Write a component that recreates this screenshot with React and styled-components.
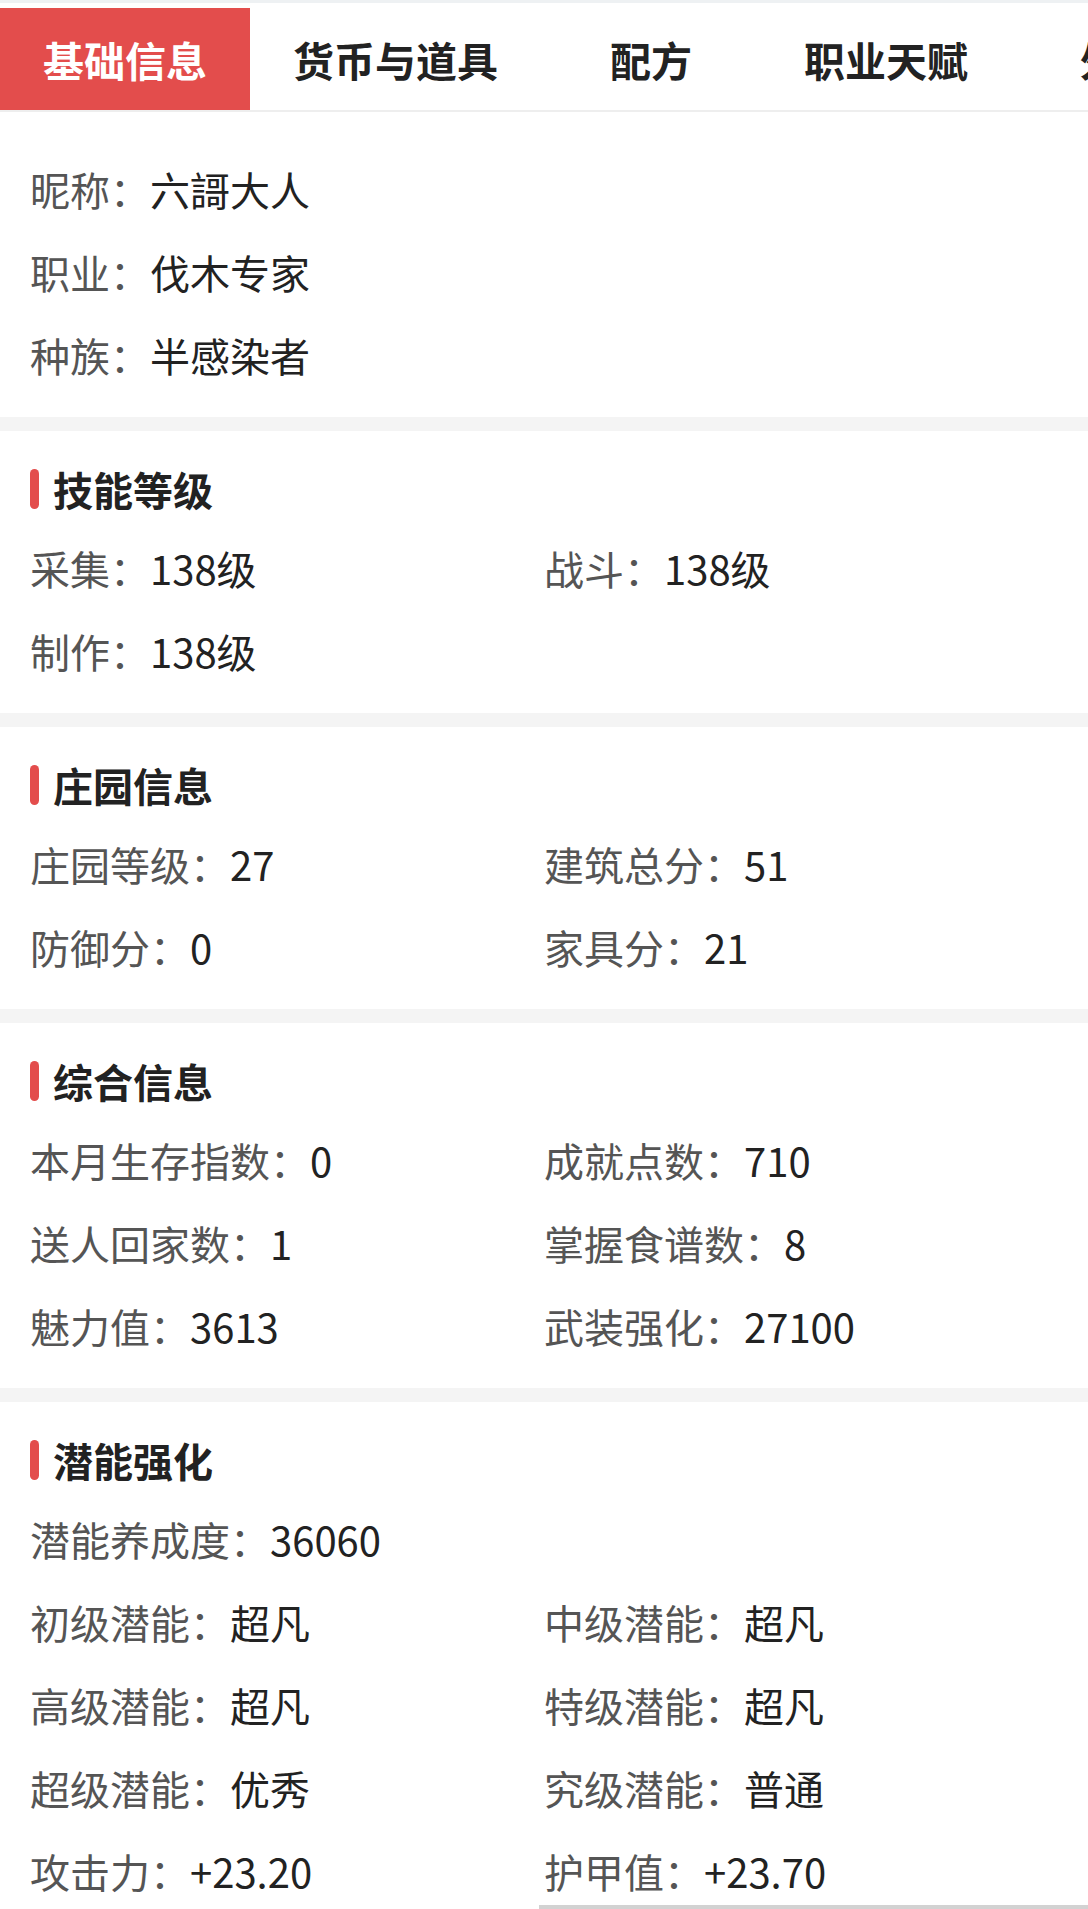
import React from 'react';
import styled, { createGlobalStyle } from 'styled-components';

const GlobalStyle = createGlobalStyle`
  html, body {
    margin: 0;
    padding: 0;
    background: #f4f4f4;
    font-family: "Noto Sans CJK SC", "Noto Sans", sans-serif;
  }
`;

const Page = styled.div`
  width: 1088px;
  overflow: hidden;
`;

const Header = styled.div`
  background: #fff;
  padding-top: 5px;
  border-top: 3px solid #eef1f3;
`;

const TabBar = styled.div`
  display: flex;
  height: 102px;
  border-bottom: 2px solid #eeeeee;
  white-space: nowrap;
  overflow: hidden;
`;

const Tab = styled.div`
  flex: none;
  display: flex;
  align-items: center;
  padding: 0 43px;
  font-size: 41px;
  font-weight: 700;
  color: ${p => (p.$active ? '#fff' : '#222')};
  background: ${p => (p.$active ? '#e34d4c' : 'transparent')};

  & + & + & {
    margin-left: 26px;
  }
`;

const Section = styled.section`
  background: #fff;
  padding: 35px 30px 21px;
  margin-bottom: 14px;
`;

const Title = styled.h2`
  display: flex;
  align-items: center;
  gap: 14px;
  height: 46px;
  margin: 0 0 14px;
  font-size: 40px;
  font-weight: 700;
  color: #222;

  &::before {
    content: '';
    width: 9px;
    height: 40px;
    border-radius: 5px;
    background: #e34d4c;
  }
`;

const Grid = styled.div`
  display: grid;
  grid-template-columns: ${p => (p.$cols === 1 ? '1fr' : '1fr 1fr')};
`;

const Item = styled.div`
  display: flex;
  align-items: center;
  height: 83px;
  font-size: 40px;
  white-space: nowrap;
  grid-column: ${p => (p.$wide ? '1 / -1' : 'auto')};
`;

const Label = styled.span`
  color: #555;
`;

const Value = styled.span`
  color: #222;
`;

const BottomEdge = styled.div`
  position: fixed;
  left: 539px;
  right: 0;
  bottom: 0;
  height: 4px;
  background: #d2d2d2;
`;

const tabs = ['基础信息', '货币与道具', '配方', '职业天赋', '外观'];

const sections = [
  {
    title: '技能等级',
    items: [
      ['采集', '138级'],
      ['战斗', '138级'],
      ['制作', '138级'],
    ],
  },
  {
    title: '庄园信息',
    items: [
      ['庄园等级', '27'],
      ['建筑总分', '51'],
      ['防御分', '0'],
      ['家具分', '21'],
    ],
  },
  {
    title: '综合信息',
    items: [
      ['本月生存指数', '0'],
      ['成就点数', '710'],
      ['送人回家数', '1'],
      ['掌握食谱数', '8'],
      ['魅力值', '3613'],
      ['武装强化', '27100'],
    ],
  },
  {
    title: '潜能强化',
    items: [
      ['潜能养成度', '36060', true],
      ['初级潜能', '超凡'],
      ['中级潜能', '超凡'],
      ['高级潜能', '超凡'],
      ['特级潜能', '超凡'],
      ['超级潜能', '优秀'],
      ['究级潜能', '普通'],
      ['攻击力', '+23.20'],
      ['护甲值', '+23.70'],
    ],
  },
];

const basic = [
  ['昵称', '六謌大人'],
  ['职业', '伐木专家'],
  ['种族', '半感染者'],
];

const Field = ({ label, value, wide }) => (
  <Item $wide={wide}>
    <Label>{label}：</Label>
    <Value>{value}</Value>
  </Item>
);

export default function App() {
  return (
    <Page>
      <GlobalStyle />
      <Header>
        <TabBar>
          {tabs.map((t, i) => (
            <Tab key={t} $active={i === 0}>{t}</Tab>
          ))}
        </TabBar>
      </Header>

      <Section>
        <Grid $cols={1}>
          {basic.map(([l, v]) => (
            <Field key={l} label={l} value={v} />
          ))}
        </Grid>
      </Section>

      {sections.map(s => (
        <Section key={s.title}>
          <Title>{s.title}</Title>
          <Grid>
            {s.items.map(([l, v, wide]) => (
              <Field key={l} label={l} value={v} wide={wide} />
            ))}
          </Grid>
        </Section>
      ))}
      <BottomEdge />
    </Page>
  );
}
